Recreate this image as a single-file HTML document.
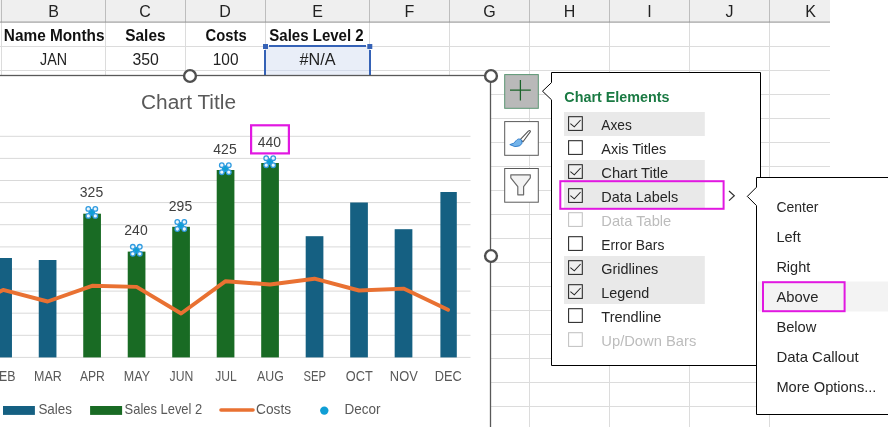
<!DOCTYPE html>
<html lang="en"><head><meta charset="utf-8"><title>Chart Elements</title>
<style>html,body{margin:0;padding:0;background:#fff;overflow:hidden}svg{display:block;will-change:transform}</style>
</head><body>
<svg width="888" height="427" viewBox="0 0 888 427" font-family='"Liberation Sans", sans-serif'>
<rect width="888" height="427" fill="#fff"/>
<rect x="0" y="0" width="830" height="22" fill="#efefef"/>
<path d="M1.5 22V427 M105.5 22V427 M185.5 22V427 M265.5 22V427 M369.5 22V427 M449.5 22V427 M529.5 22V427 M609.5 22V427 M689.5 22V427 M769.5 22V427 M0 46.5H830 M0 70.5H830 M0 94.5H830 M0 118.5H830 M0 142.5H830 M0 166.5H830 M0 190.5H830 M0 214.5H830 M0 238.5H830 M0 262.5H830 M0 286.5H830 M0 310.5H830 M0 334.5H830 M0 358.5H830 M0 382.5H830 M0 406.5H830" stroke="#dcdcdc" stroke-width="1" fill="none"/>
<path d="M1.5 0V22 M105.5 0V22 M185.5 0V22 M265.5 0V22 M369.5 0V22 M449.5 0V22 M529.5 0V22 M609.5 0V22 M689.5 0V22 M769.5 0V22" stroke="#bdbdbd" stroke-width="1" fill="none"/>
<path d="M0 22.1H830" stroke="#8f8f8f" stroke-width="1" fill="none"/>
<text x="53.5" y="16.7" font-size="16" fill="#222" text-anchor="middle">B</text>
<text x="145" y="16.7" font-size="16" fill="#222" text-anchor="middle">C</text>
<text x="225" y="16.7" font-size="16" fill="#222" text-anchor="middle">D</text>
<text x="317.5" y="16.7" font-size="16" fill="#222" text-anchor="middle">E</text>
<text x="409.5" y="16.7" font-size="16" fill="#222" text-anchor="middle">F</text>
<text x="489.5" y="16.7" font-size="16" fill="#222" text-anchor="middle">G</text>
<text x="569.5" y="16.7" font-size="16" fill="#222" text-anchor="middle">H</text>
<text x="649.5" y="16.7" font-size="16" fill="#222" text-anchor="middle">I</text>
<text x="729.5" y="16.7" font-size="16" fill="#222" text-anchor="middle">J</text>
<text x="810.5" y="16.7" font-size="16" fill="#222" text-anchor="middle">K</text>
<text x="54.2" y="40.9" font-size="16" fill="#111" text-anchor="middle" font-weight="bold" textLength="100.7" lengthAdjust="spacingAndGlyphs">Name Months</text>
<text x="145.4" y="40.9" font-size="16" fill="#111" text-anchor="middle" font-weight="bold" textLength="40.2" lengthAdjust="spacingAndGlyphs">Sales</text>
<text x="226.1" y="40.9" font-size="16" fill="#111" text-anchor="middle" font-weight="bold" textLength="41" lengthAdjust="spacingAndGlyphs">Costs</text>
<text x="316.5" y="40.9" font-size="16" fill="#111" text-anchor="middle" font-weight="bold" textLength="94.3" lengthAdjust="spacingAndGlyphs">Sales Level 2</text>
<rect x="266" y="47" width="103" height="29" fill="#e9eef8"/>
<path d="M266 70.5H369" stroke="#d5dcea" stroke-width="1" fill="none"/>
<path d="M269 46H366M265 50V75.5M370 50V75.5" stroke="#3562b6" stroke-width="2" fill="none"/>
<rect x="263" y="44" width="5" height="5" fill="#3562b6"/><rect x="367.3" y="44" width="5" height="5" fill="#3562b6"/>
<text x="53.5" y="64.6" font-size="16" fill="#222" text-anchor="middle" textLength="27" lengthAdjust="spacingAndGlyphs">JAN</text>
<text x="145.6" y="64.6" font-size="16" fill="#222" text-anchor="middle" textLength="26.4" lengthAdjust="spacingAndGlyphs">350</text>
<text x="225.6" y="64.6" font-size="16" fill="#222" text-anchor="middle" textLength="25.7" lengthAdjust="spacingAndGlyphs">100</text>
<text x="317.6" y="64.6" font-size="16" fill="#222" text-anchor="middle" textLength="36" lengthAdjust="spacingAndGlyphs">#N/A</text>
<rect x="-20" y="75.5" width="510.5" height="400" fill="#fff" stroke="#595959" stroke-width="1.3"/>
<path d="M0 136.3H470.5 M0 158.4H470.5 M0 180.5H470.5 M0 202.6H470.5 M0 224.7H470.5 M0 246.9H470.5 M0 269.0H470.5 M0 291.1H470.5 M0 313.2H470.5 M0 335.3H470.5 M0 357.4H470.5" stroke="#d9d9d9" stroke-width="1" fill="none"/>
<text x="188.5" y="109.3" font-size="19.5" fill="#595959" text-anchor="middle" textLength="95" lengthAdjust="spacingAndGlyphs">Chart Title</text>
<rect x="-5.74" y="258" width="17.7" height="99.4" fill="#156082"/>
<rect x="38.75" y="260" width="17.7" height="97.4" fill="#156082"/>
<rect x="83.24" y="213.7" width="17.7" height="143.7" fill="#196b24"/>
<rect x="127.73" y="251.6" width="17.7" height="105.8" fill="#196b24"/>
<rect x="172.22" y="226.8" width="17.7" height="130.6" fill="#196b24"/>
<rect x="216.71" y="170" width="17.7" height="187.4" fill="#196b24"/>
<rect x="261.20" y="163" width="17.7" height="194.4" fill="#196b24"/>
<rect x="305.69" y="236.2" width="17.7" height="121.2" fill="#156082"/>
<rect x="350.18" y="202.5" width="17.7" height="154.9" fill="#156082"/>
<rect x="394.67" y="229.2" width="17.7" height="128.2" fill="#156082"/>
<rect x="440.40" y="192" width="16.4" height="165.4" fill="#156082"/>
<polyline points="-41.4,313 3.1,289.9 47.6,301.5 92.1,285.8 136.6,286.9 181.1,313.5 225.6,281.2 270.1,284.5 314.5,278.7 359.0,290.5 403.5,288.6 448.0,309.8" fill="none" stroke="#e97132" stroke-width="3.9" stroke-linecap="round" stroke-linejoin="round"/>
<circle cx="91.8" cy="212.4" r="3.4" fill="#0f9ed5"/>
<circle cx="88.3" cy="208.9" r="2.3" fill="#eaf5fd" stroke="#2f9be0" stroke-width="1.3"/>
<circle cx="88.3" cy="215.9" r="2.3" fill="#eaf5fd" stroke="#2f9be0" stroke-width="1.3"/>
<circle cx="95.3" cy="208.9" r="2.3" fill="#eaf5fd" stroke="#2f9be0" stroke-width="1.3"/>
<circle cx="95.3" cy="215.9" r="2.3" fill="#eaf5fd" stroke="#2f9be0" stroke-width="1.3"/>
<text x="91.5" y="197.4" font-size="14" fill="#404040" text-anchor="middle" textLength="23.3" lengthAdjust="spacingAndGlyphs">325</text>
<circle cx="136.3" cy="250.3" r="3.4" fill="#0f9ed5"/>
<circle cx="132.8" cy="246.8" r="2.3" fill="#eaf5fd" stroke="#2f9be0" stroke-width="1.3"/>
<circle cx="132.8" cy="253.8" r="2.3" fill="#eaf5fd" stroke="#2f9be0" stroke-width="1.3"/>
<circle cx="139.8" cy="246.8" r="2.3" fill="#eaf5fd" stroke="#2f9be0" stroke-width="1.3"/>
<circle cx="139.8" cy="253.8" r="2.3" fill="#eaf5fd" stroke="#2f9be0" stroke-width="1.3"/>
<text x="136.0" y="235.3" font-size="14" fill="#404040" text-anchor="middle" textLength="23.3" lengthAdjust="spacingAndGlyphs">240</text>
<circle cx="180.8" cy="225.5" r="3.4" fill="#0f9ed5"/>
<circle cx="177.3" cy="222.0" r="2.3" fill="#eaf5fd" stroke="#2f9be0" stroke-width="1.3"/>
<circle cx="177.3" cy="229.0" r="2.3" fill="#eaf5fd" stroke="#2f9be0" stroke-width="1.3"/>
<circle cx="184.3" cy="222.0" r="2.3" fill="#eaf5fd" stroke="#2f9be0" stroke-width="1.3"/>
<circle cx="184.3" cy="229.0" r="2.3" fill="#eaf5fd" stroke="#2f9be0" stroke-width="1.3"/>
<text x="180.5" y="210.5" font-size="14" fill="#404040" text-anchor="middle" textLength="23.3" lengthAdjust="spacingAndGlyphs">295</text>
<circle cx="225.3" cy="168.7" r="3.4" fill="#0f9ed5"/>
<circle cx="221.8" cy="165.2" r="2.3" fill="#eaf5fd" stroke="#2f9be0" stroke-width="1.3"/>
<circle cx="221.8" cy="172.2" r="2.3" fill="#eaf5fd" stroke="#2f9be0" stroke-width="1.3"/>
<circle cx="228.8" cy="165.2" r="2.3" fill="#eaf5fd" stroke="#2f9be0" stroke-width="1.3"/>
<circle cx="228.8" cy="172.2" r="2.3" fill="#eaf5fd" stroke="#2f9be0" stroke-width="1.3"/>
<text x="225.0" y="153.7" font-size="14" fill="#404040" text-anchor="middle" textLength="23.3" lengthAdjust="spacingAndGlyphs">425</text>
<circle cx="269.8" cy="161.7" r="3.4" fill="#0f9ed5"/>
<circle cx="266.2" cy="158.2" r="2.3" fill="#eaf5fd" stroke="#2f9be0" stroke-width="1.3"/>
<circle cx="266.2" cy="165.2" r="2.3" fill="#eaf5fd" stroke="#2f9be0" stroke-width="1.3"/>
<circle cx="273.2" cy="158.2" r="2.3" fill="#eaf5fd" stroke="#2f9be0" stroke-width="1.3"/>
<circle cx="273.2" cy="165.2" r="2.3" fill="#eaf5fd" stroke="#2f9be0" stroke-width="1.3"/>
<text x="269.4" y="146.7" font-size="14" fill="#404040" text-anchor="middle" textLength="23.3" lengthAdjust="spacingAndGlyphs">440</text>
<text x="3.4" y="380.7" font-size="14.5" fill="#595959" text-anchor="middle" textLength="24.0" lengthAdjust="spacingAndGlyphs">FEB</text>
<text x="47.9" y="380.7" font-size="14.5" fill="#595959" text-anchor="middle" textLength="27.7" lengthAdjust="spacingAndGlyphs">MAR</text>
<text x="92.4" y="380.7" font-size="14.5" fill="#595959" text-anchor="middle" textLength="25.0" lengthAdjust="spacingAndGlyphs">APR</text>
<text x="136.9" y="380.7" font-size="14.5" fill="#595959" text-anchor="middle" textLength="26.2" lengthAdjust="spacingAndGlyphs">MAY</text>
<text x="181.4" y="380.7" font-size="14.5" fill="#595959" text-anchor="middle" textLength="23.7" lengthAdjust="spacingAndGlyphs">JUN</text>
<text x="225.9" y="380.7" font-size="14.5" fill="#595959" text-anchor="middle" textLength="21.5" lengthAdjust="spacingAndGlyphs">JUL</text>
<text x="270.4" y="380.7" font-size="14.5" fill="#595959" text-anchor="middle" textLength="26.7" lengthAdjust="spacingAndGlyphs">AUG</text>
<text x="314.8" y="380.7" font-size="14.5" fill="#595959" text-anchor="middle" textLength="22.5" lengthAdjust="spacingAndGlyphs">SEP</text>
<text x="359.3" y="380.7" font-size="14.5" fill="#595959" text-anchor="middle" textLength="27.0" lengthAdjust="spacingAndGlyphs">OCT</text>
<text x="403.8" y="380.7" font-size="14.5" fill="#595959" text-anchor="middle" textLength="27.9" lengthAdjust="spacingAndGlyphs">NOV</text>
<text x="448.3" y="380.7" font-size="14.5" fill="#595959" text-anchor="middle" textLength="27.0" lengthAdjust="spacingAndGlyphs">DEC</text>
<rect x="3" y="406" width="31.9" height="8.9" fill="#156082"/>
<text x="38.4" y="414.2" font-size="14.5" fill="#595959" textLength="33.6" lengthAdjust="spacingAndGlyphs">Sales</text>
<rect x="90.1" y="406" width="32" height="8.9" fill="#196b24"/>
<text x="124.6" y="414.2" font-size="14.5" fill="#595959" textLength="77.6" lengthAdjust="spacingAndGlyphs">Sales Level 2</text>
<path d="M221 410H253" stroke="#e97132" stroke-width="3.6" stroke-linecap="round" fill="none"/>
<text x="256.1" y="414.2" font-size="14.5" fill="#595959" textLength="35" lengthAdjust="spacingAndGlyphs">Costs</text>
<circle cx="324.3" cy="410.6" r="4.2" fill="#0f9ed5"/>
<text x="344.6" y="414.2" font-size="14.5" fill="#595959" textLength="36" lengthAdjust="spacingAndGlyphs">Decor</text>
<rect x="251.1" y="125.3" width="37.8" height="28.1" fill="none" stroke="#e118e1" stroke-width="2.2"/>
<circle cx="190" cy="76" r="5.9" fill="#fff" stroke="#4f4f4f" stroke-width="2.4"/>
<circle cx="491" cy="76" r="5.9" fill="#fff" stroke="#4f4f4f" stroke-width="2.4"/>
<circle cx="491" cy="256" r="5.9" fill="#fff" stroke="#4f4f4f" stroke-width="2.4"/>
<rect x="504.7" y="74.6" width="33.6" height="33.7" fill="#b9b9b9" stroke="#5a9572" stroke-width="1"/>
<path d="M510 90.2H530.8M520.4 80V100.5" stroke="#1a6329" stroke-width="1.25" fill="none"/>
<rect x="504.7" y="121.6" width="33.6" height="33.7" fill="#fff" stroke="#5a5a5a" stroke-width="1"/>
<path d="M520.2 139.6L528.3 131.2Q530.2 129.6 530.4 131.6L523 141.8Z" fill="#fff" stroke="#555" stroke-width="1.1" stroke-linejoin="round"/>
<path d="M509.8 144.6Q514 144 516 140.8Q518.6 137.4 521.6 140.2Q523.4 143.4 519.8 145.8Q515 148 509.8 144.6Z" fill="#74b4ea" stroke="#2a78c8" stroke-width="0.9" stroke-linejoin="round"/>
<rect x="504.7" y="168.5" width="33.6" height="33.7" fill="#fff" stroke="#5a5a5a" stroke-width="1"/>
<path d="M510.8 174.8H530.3V177.8L523.6 186.6V194.8H517.8V186.6L510.8 177.8Z" fill="#f3f3f3" stroke="#6a6a6a" stroke-width="1.2" stroke-linejoin="round"/>
<path d="M551.5 72.5H760.5V365.5H551.5V99.8L542.5 91.2L551.5 82.6Z" fill="#fff" stroke="#000" stroke-width="1" stroke-linejoin="miter"/>
<text x="564.3" y="101.9" font-size="15" fill="#1a7a43" font-weight="bold" textLength="105.2" lengthAdjust="spacingAndGlyphs">Chart Elements</text>
<rect x="564" y="112" width="140.8" height="24" fill="#e9e9e9"/>
<rect x="564" y="160" width="140.8" height="24" fill="#e9e9e9"/>
<rect x="564" y="184" width="140.8" height="24" fill="#e9e9e9"/>
<rect x="564" y="256" width="140.8" height="24" fill="#e9e9e9"/>
<rect x="564" y="280" width="140.8" height="24" fill="#e9e9e9"/>
<rect x="568.6" y="116.7" width="13.7" height="13.7" fill="#fff" fill-opacity="0.35" stroke="#262626" stroke-width="1.05"/>
<path d="M570.4 123.6L574.3 126.8L580.6 120" fill="none" stroke="#262626" stroke-width="1.05"/>
<text x="601.3" y="129.7" font-size="15" fill="#262626" textLength="30.5" lengthAdjust="spacingAndGlyphs">Axes</text>
<rect x="568.6" y="140.7" width="13.7" height="13.7" fill="#fff" fill-opacity="1" stroke="#262626" stroke-width="1.05"/>
<text x="601.3" y="153.7" font-size="15" fill="#262626" textLength="65" lengthAdjust="spacingAndGlyphs">Axis Titles</text>
<rect x="568.6" y="164.7" width="13.7" height="13.7" fill="#fff" fill-opacity="0.35" stroke="#262626" stroke-width="1.05"/>
<path d="M570.4 171.6L574.3 174.8L580.6 168" fill="none" stroke="#262626" stroke-width="1.05"/>
<text x="601.3" y="177.8" font-size="15" fill="#262626" textLength="67" lengthAdjust="spacingAndGlyphs">Chart Title</text>
<rect x="568.6" y="188.7" width="13.7" height="13.7" fill="#fff" fill-opacity="0.35" stroke="#262626" stroke-width="1.05"/>
<path d="M570.4 195.6L574.3 198.8L580.6 192" fill="none" stroke="#262626" stroke-width="1.05"/>
<text x="601.3" y="201.8" font-size="15" fill="#262626" textLength="77" lengthAdjust="spacingAndGlyphs">Data Labels</text>
<rect x="568.6" y="212.7" width="13.7" height="13.7" fill="#fff" fill-opacity="1" stroke="#c2c2c2" stroke-width="1.05"/>
<text x="601.3" y="225.8" font-size="15" fill="#bcbcbc" textLength="70" lengthAdjust="spacingAndGlyphs">Data Table</text>
<rect x="568.6" y="236.7" width="13.7" height="13.7" fill="#fff" fill-opacity="1" stroke="#262626" stroke-width="1.05"/>
<text x="601.3" y="249.8" font-size="15" fill="#262626" textLength="63" lengthAdjust="spacingAndGlyphs">Error Bars</text>
<rect x="568.6" y="260.7" width="13.7" height="13.7" fill="#fff" fill-opacity="0.35" stroke="#262626" stroke-width="1.05"/>
<path d="M570.4 267.6L574.3 270.8L580.6 264" fill="none" stroke="#262626" stroke-width="1.05"/>
<text x="601.3" y="273.9" font-size="15" fill="#262626" textLength="57" lengthAdjust="spacingAndGlyphs">Gridlines</text>
<rect x="568.6" y="284.7" width="13.7" height="13.7" fill="#fff" fill-opacity="0.35" stroke="#262626" stroke-width="1.05"/>
<path d="M570.4 291.6L574.3 294.8L580.6 288" fill="none" stroke="#262626" stroke-width="1.05"/>
<text x="601.3" y="297.9" font-size="15" fill="#262626" textLength="48" lengthAdjust="spacingAndGlyphs">Legend</text>
<rect x="568.6" y="308.7" width="13.7" height="13.7" fill="#fff" fill-opacity="1" stroke="#262626" stroke-width="1.05"/>
<text x="601.3" y="321.9" font-size="15" fill="#262626" textLength="60" lengthAdjust="spacingAndGlyphs">Trendline</text>
<rect x="568.6" y="332.7" width="13.7" height="13.7" fill="#fff" fill-opacity="1" stroke="#c2c2c2" stroke-width="1.05"/>
<text x="601.3" y="346.0" font-size="15" fill="#bcbcbc" textLength="95" lengthAdjust="spacingAndGlyphs">Up/Down Bars</text>
<rect x="560.3" y="181.2" width="163.3" height="27.6" fill="none" stroke="#e118e1" stroke-width="2"/>
<path d="M729 191L734.3 195.8L729 200.6" fill="none" stroke="#333" stroke-width="1.2"/>
<path d="M756.5 177.5H895V414.5H756.5V205.6L747.3 196.4L756.5 187.2Z" fill="#fff" stroke="#000" stroke-width="1"/>
<rect x="758" y="281.5" width="130" height="30" fill="#f3f3f3"/>
<text x="776.4" y="211.6" font-size="15" fill="#262626" textLength="42" lengthAdjust="spacingAndGlyphs">Center</text>
<text x="776.4" y="241.6" font-size="15" fill="#262626" textLength="24.3" lengthAdjust="spacingAndGlyphs">Left</text>
<text x="776.4" y="271.6" font-size="15" fill="#262626" textLength="33.9" lengthAdjust="spacingAndGlyphs">Right</text>
<text x="776.4" y="301.6" font-size="15" fill="#262626" textLength="42" lengthAdjust="spacingAndGlyphs">Above</text>
<text x="776.4" y="331.6" font-size="15" fill="#262626" textLength="40" lengthAdjust="spacingAndGlyphs">Below</text>
<text x="776.4" y="361.6" font-size="15" fill="#262626" textLength="82.2" lengthAdjust="spacingAndGlyphs">Data Callout</text>
<text x="776.4" y="391.6" font-size="15" fill="#262626" textLength="100" lengthAdjust="spacingAndGlyphs">More Options...</text>
<rect x="763" y="282.2" width="81.6" height="29" fill="none" stroke="#e118e1" stroke-width="2"/>
</svg>
</body></html>
